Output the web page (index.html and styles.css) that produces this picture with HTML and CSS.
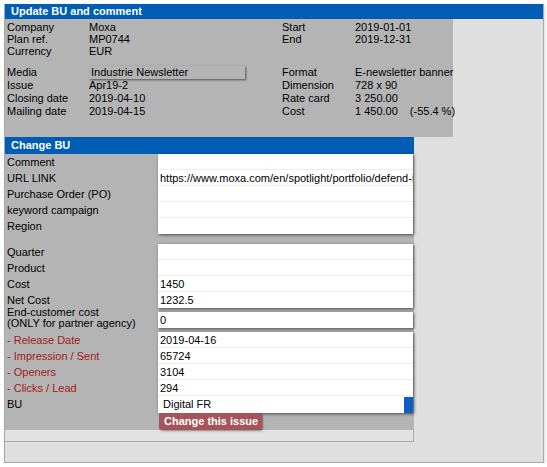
FILE: index.html
```html
<!DOCTYPE html>
<html>
<head>
<meta charset="utf-8">
<link rel="stylesheet" href="styles.css">
</head>
<body>
<div class="panel">
  <div class="title">Update BU and comment</div>
  <div class="info">
    <div class="grid g1">
      <span>Company</span><span>Moxa</span><span>Start</span><span>2019-01-01</span>
      <span>Plan ref.</span><span>MP0744</span><span>End</span><span>2019-12-31</span>
      <span>Currency</span><span>EUR</span><span></span><span></span>
    </div>
    <div class="grid g2">
      <span>Media</span><span><span class="mediabox">Industrie Newsletter</span></span><span>Format</span><span>E-newsletter banner</span>
      <span>Issue</span><span>Apr19-2</span><span>Dimension</span><span>728 x 90</span>
      <span>Closing date</span><span>2019-04-10</span><span>Rate card</span><span>3 250.00</span>
      <span>Mailing date</span><span>2019-04-15</span><span>Cost</span><span>1 450.00<span class="pct">(-55.4 %)</span></span>
    </div>
  </div>
  <div class="change">
    <div class="title title2">Change BU</div>
    <div class="body">
      <div class="group">
        <div class="labels">
          <div class="row">Comment</div>
          <div class="row">URL LINK</div>
          <div class="row">Purchase Order (PO)</div>
          <div class="row">keyword campaign</div>
          <div class="row">Region</div>
        </div>
        <div class="box">
          <div class="cell"></div>
          <div class="cell">https://www.moxa.com/en/spotlight/portfolio/defend-industrial-networks</div>
          <div class="cell"></div>
          <div class="cell"></div>
          <div class="cell last"></div>
        </div>
      </div>
      <div class="group gap10">
        <div class="labels">
          <div class="row">Quarter</div>
          <div class="row">Product</div>
          <div class="row">Cost</div>
          <div class="row">Net Cost</div>
        </div>
        <div class="box">
          <div class="cell"></div>
          <div class="cell"></div>
          <div class="cell">1450</div>
          <div class="cell last">1232.5</div>
        </div>
      </div>
      <div class="group gap4">
        <div class="labels">
          <div class="row two">End-customer cost<br>(ONLY for partner agency)</div>
        </div>
        <div class="box">
          <div class="cell last">0</div>
        </div>
      </div>
      <div class="group gap4">
        <div class="labels">
          <div class="row red">- Release Date</div>
          <div class="row red">- Impression / Sent</div>
          <div class="row red">- Openers</div>
          <div class="row red">- Clicks / Lead</div>
          <div class="row bu">BU</div>
        </div>
        <div class="box">
          <div class="cell">2019-04-16</div>
          <div class="cell">65724</div>
          <div class="cell">3104</div>
          <div class="cell">294</div>
          <div class="cell select"><span class="seltext">Digital FR</span><span class="selbtn"></span></div>
        </div>
      </div>
      <div class="btnrow">
        <span class="button">Change this issue</span>
      </div>
    </div>
    <div class="foot"></div>
  </div>
</div>
</body>
</html>
```
FILE: styles.css
```css
html, body {
  margin: 0;
  padding: 0;
  background: #ffffff;
}
body {
  font-family: "Liberation Sans", Arial, sans-serif;
  font-size: 11px;
  color: #000;
}
.panel {
  margin: 4px 0 0 4px;
  width: 538px;
  height: 458px;
  background: #dfdfdf;
  border-left: 1px solid #a9a9a9;
  border-right: 1px solid #a9a9a9;
  border-bottom: 1px solid #a9a9a9;
  box-shadow: 1px 1px 3px rgba(0,0,0,0.15);
}
.title {
  height: 15px;
  line-height: 15px;
  background: #005db6;
  color: #fff;
  font-weight: bold;
  padding-left: 6px;
}
.title2 {
  height: 17px;
  line-height: 17px;
}
.info {
  width: 448px;
  height: 118px;
  background: #b4b4b4;
  padding-top: 2px;
  box-sizing: border-box;
}
.grid {
  display: grid;
  grid-template-columns: 82px 193px 73px auto;
  padding-left: 2px;
  white-space: nowrap;
}
.g1 {
  grid-auto-rows: 12px;
  line-height: 12px;
}
.g2 {
  margin-top: 9px;
  grid-auto-rows: 13px;
  line-height: 13px;
}
.mediabox {
  display: block;
  width: 154px;
  height: 13px;
  padding-left: 2px;
  box-shadow: 1px 1px 2px rgba(0,0,0,0.55);
}
.pct {
  margin-left: 12px;
}
.change {
  width: 409px;
}
.body {
  background: #b4b4b4;
  padding-top: 0;
}
.group {
  display: flex;
}
.gap10 { margin-top: 10px; }
.gap4 { margin-top: 4px; }
.labels {
  width: 153px;
  padding-left: 2px;
  box-sizing: border-box;
}
.row {
  height: 16px;
  line-height: 16px;
  white-space: nowrap;
}
.row.two {
  line-height: 11px;
  margin-top: -5px;
  height: 22px;
  margin-bottom: -6px;
}
.row.bu {
  height: 17px;
  line-height: 17px;
}
.red {
  color: #a31a17;
}
.box {
  width: 255px;
  background: #fff;
  box-shadow: 1px 1px 3px rgba(0,0,0,0.6);
}
.cell {
  height: 16px;
  line-height: 16px;
  padding-left: 2px;
  border-bottom: 1px solid #ececec;
  box-sizing: border-box;
  white-space: nowrap;
  overflow: hidden;
}
.cell.last {
  border-bottom: none;
}
.cell.select {
  height: 17px;
  line-height: 17px;
  border-bottom: none;
  display: flex;
  padding-left: 5px;
}
.seltext {
  flex: 1;
}
.selbtn {
  width: 9px;
  margin-top: 1px;
  background: #0a5fc0;
}
.btnrow {
  height: 17px;
  padding-left: 154px;
}
.button {
  display: inline-block;
  height: 17px;
  line-height: 17px;
  padding: 0 4px 0 5px;
  background: #a5545a;
  color: #fff;
  font-weight: bold;
  border-radius: 3px;
  box-shadow: 1px 1px 2px rgba(0,0,0,0.4);
}
.foot {
  height: 11px;
  background: #e2e2e2;
  border-bottom: 1px solid #a9a9a9;
  border-right: 1px solid #a9a9a9;
}
```
